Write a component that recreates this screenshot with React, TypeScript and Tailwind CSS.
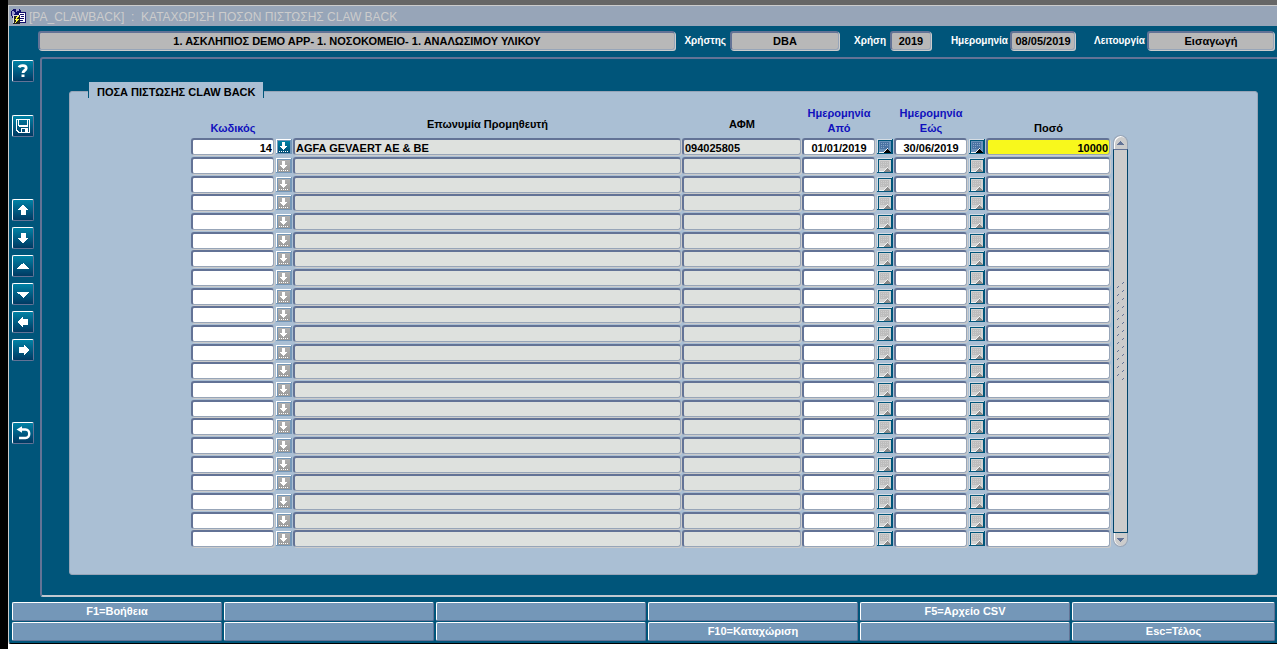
import type { ReactNode } from "react";

const PIXEL = "crispEdges" as const;

function AppIcon() {
  return (
    <svg width="17" height="17" viewBox="0 0 17 17" shapeRendering={PIXEL} aria-hidden="true">
      <path d="M3 1h7v1h1v8h-1v1H4v-1H2V8H1V3h1V2h1z" fill="#10106c" />
      <path d="M2 3h2v1h1v2H4v2H2zM6 1h3v2H7v1H6z" fill="#9c9ccc" />
      <path d="M8 4h8v11H8z" fill="#10106c" />
      <path d="M9 5h6v9H9z" fill="#fff" />
      <path d="M10 6h4v1h-4zM11 8h3v1h-3zM10 10h4v1h-4zM10 12h3v1h-3z" fill="#10106c" />
      <path d="M3 7h7v9H3z" fill="#222" />
      <path d="M3 7h6v1H4v7H3z" fill="#ddd" />
      <path d="M7 8h2v1H8v1H7v1h2v1H8v1H7v1H6v1H5v-1h1v-2H5v-1h1V9h1z" fill="#ffff3c" />
    </svg>
  );
}

function Glyph({ d }: { d: string }) {
  return (
    <svg width="18" height="18" viewBox="0 0 18 18" shapeRendering={PIXEL} aria-hidden="true">
      <path d={d} fill="#fff" />
    </svg>
  );
}

function ToolButton({ label, children }: { label: string; children: ReactNode }) {
  return (
    <button
      type="button"
      aria-label={label}
      className="flex h-[22px] w-[22px] shrink-0 items-center justify-center rounded-[2px] border border-t-white border-l-white border-r-[#637396] border-b-[#637396] bg-linear-to-b from-[#0082a5] to-[#003a63]"
    >
      {children}
    </button>
  );
}

function Toolbar() {
  return (
    <nav aria-label="Εργαλεία" className="flex w-[31px] shrink-0 flex-col pt-[3px] pl-[3px]">
      <ToolButton label="Βοήθεια">
        <svg width="18" height="18" viewBox="0 0 18 18" aria-hidden="true">
          <path d="M5 5.4C6 3 12.2 3 12.2 6.2c0 2.4-3.2 2.2-3.2 4.8" fill="none" stroke="#fff" strokeWidth="2.8" />
          <path d="M7.5 12.5h3V15h-3z" fill="#fff" />
        </svg>
      </ToolButton>
      <div className="flex flex-col pt-[33px]">
        <ToolButton label="Αποθήκευση">
          <Glyph d="M2 2h14v14H4v-1H3v-1H2zM3 3v10h1v1h1v1h2v-4h7v4h1V3h-1v6H4V3zM5 3v5h8V3zM8 12v3h3v-3zM5 9h9v1H5z" />
        </ToolButton>
      </div>
      <div className="flex flex-col gap-1.5 pt-[62px]">
        <ToolButton label="Προηγούμενη εγγραφή">
          <Glyph d="M9 4h1v1h1v1h1v1h1v1h1v1h-2v5H7V9H4V8h1V7h1V6h1V5h1V4z" />
        </ToolButton>
        <ToolButton label="Επόμενη εγγραφή">
          <Glyph d="M7 4h5v5h2v1h-1v1h-1v1h-1v1h-1v1H8v-1H7v-1H6v-1H5v-1H4V9h3z" />
        </ToolButton>
        <ToolButton label="Προηγούμενο μπλοκ">
          <Glyph d="M9 6h1v1h1v1h1v1h1v1h1v1h1v1H3v-1h1v-1h1V9h1V8h1V7h2z" />
        </ToolButton>
        <ToolButton label="Επόμενο μπλοκ">
          <Glyph d="M3 7h12v1h-1v1h-1v1h-1v1h-1v1h-1v1H9v-1H8v-1H7v-1H6V9H4V8H3z" />
        </ToolButton>
        <ToolButton label="Προηγούμενο πεδίο">
          <Glyph d="M4 8h1V7h1V6h1V5h1V4h1v2h5v6H9v2H8v-1H7v-1H6v-1H5v-1H4z" />
        </ToolButton>
        <ToolButton label="Επόμενο πεδίο">
          <Glyph d="M5 6h5V4h1v1h1v1h1v1h1v1h1v2h-1v1h-1v1h-1v1h-1v1h-1v-2H5z" />
        </ToolButton>
      </div>
      <div className="flex flex-col pt-[61px]">
        <ToolButton label="Έξοδος">
          <svg width="18" height="18" viewBox="0 0 18 18" aria-hidden="true">
            <path d="M5 5.5h6.5c5 0 5 8.5 0 8.5H5" fill="none" stroke="#fff" strokeWidth="2.4" />
            <path d="M2.5 5.5 8 2.2v6.6z" fill="#fff" />
          </svg>
        </ToolButton>
      </div>
    </nav>
  );
}

const headerInput =
  "h-[19px] min-w-0 rounded-[3px] border-t-2 border-l-2 border-r border-b border-t-[#637396] border-l-[#637396] border-r-[#97a5b8] border-b-[#97a5b8] bg-[#b8b8b8] text-center text-[11px] font-bold text-black shadow-[1px_1px_0_#ccc] outline-none";

function HeaderBar() {
  const label = "shrink-0 text-right text-[10px] font-bold text-white";
  return (
    <div className="flex h-[31px] items-center pr-[3px] pb-0.5 pl-[29px]">
      <input aria-label="Εφαρμογή" readOnly value="1. ΑΣΚΛΗΠΙΟΣ DEMO APP- 1. ΝΟΣΟΚΟΜΕΙΟ- 1. ΑΝΑΛΩΣΙΜΟΥ ΥΛΙΚΟΥ" className={`${headerInput} flex-1`} />
      <label htmlFor="user" className={`${label} mr-1 w-[51px]`}>Χρήστης</label>
      <input id="user" readOnly value="DBA" className={`${headerInput} w-[109px]`} />
      <label htmlFor="year" className={`${label} mr-1 w-[47px]`}>Χρήση</label>
      <input id="year" readOnly value="2019" className={`${headerInput} w-[41px]`} />
      <label htmlFor="date" className={`${label} mr-0.5 w-[77px]`}>Ημερομηνία</label>
      <input id="date" readOnly value="08/05/2019" className={`${headerInput} w-[65px]`} />
      <label htmlFor="mode" className={`${label} mr-0.5 w-[70px]`}>Λειτουργία</label>
      <input id="mode" readOnly value="Εισαγωγή" className={`${headerInput} w-[127px]`} />
    </div>
  );
}

type Tone = "white" | "gray" | "yellow";

const tones: Record<Tone, string> = {
  white: "bg-white",
  gray: "bg-[#dee1de]",
  yellow: "bg-[#f8f81c]",
};

function Field({ label, value, tone, align }: { label: string; value: string; tone: Tone; align: string }) {
  return (
    <td className="p-0 pr-px align-top">
      <input
        aria-label={label}
        defaultValue={value}
        readOnly={tone === "gray"}
        className={`block h-[17px] w-full min-w-0 rounded-[3px] border-t-2 border-r border-b border-l-2 border-t-[#637396] border-r-[#97a5b8] border-b-[#97a5b8] border-l-[#637396] px-px pt-1 pb-0.5 text-[11px] leading-none font-bold text-black shadow-[1px_1px_0_#ccc] outline-none ${tones[tone]} ${align}`}
      />
    </td>
  );
}

function LookupCell({ active }: { active: boolean }) {
  return (
    <td className="p-0 pl-px align-top">
      <button type="button" aria-label="Λίστα τιμών" className="block h-[17px] w-4">
        <svg width="16" height="17" viewBox="0 0 16 17" shapeRendering={PIXEL} aria-hidden="true">
          <defs>
            <linearGradient id={active ? "lookup-on" : "lookup-off"} x2="0" y2="1">
              <stop offset="0" stopColor={active ? "#0082a5" : "#b0b0b0"} />
              <stop offset="1" stopColor={active ? "#004a73" : "#999"} />
            </linearGradient>
          </defs>
          <path d="M0 1h16v15H0z" fill="#7497b8" />
          <path d="M0 1h15v1H1v13H0z" fill="#fff" />
          <path d="M2 3h12v12H2z" fill={active ? "url(#lookup-on)" : "url(#lookup-off)"} />
          <path d="M6 4h3v4h2v1h-1v1H9v1H8v1H7v-1H6v-1H5V9H4V8h2z" fill="#fff" />
          <path d="M3 13h1v1H3zM5 13h1v1H5zM7 13h1v1H7zM9 13h1v1H9zM11 13h1v1h-1z" fill="#fff" />
        </svg>
      </button>
    </td>
  );
}

function CalendarCell({ active }: { active: boolean }) {
  return (
    <td className="p-0 pl-px align-top">
      <button type="button" aria-label="Ημερολόγιο" className="block h-[17px] w-4">
        <svg width="16" height="17" viewBox="0 0 16 17" shapeRendering={PIXEL} aria-hidden="true">
          <path d="M0 1h16v15H0z" fill="#00557a" />
          <path d="M0 1h15v1H1v13H0z" fill="#d6dde4" />
          <path d="M2 3h12v12H2z" fill={active ? "#6b92bb" : "#d2d2d2"} />
          <path d="M3 4h9v7H3z" fill={active ? "#4a73a3" : "#bdbdbd"} />
          <path
            d="M4 5h1v1H4zM6 5h1v1H6zM8 5h1v1H8zM10 5h1v1h-1zM4 7h1v1H4zM6 7h1v1H6zM8 7h1v1H8zM10 7h1v1h-1zM4 9h1v1H4zM6 9h1v1H6z"
            fill={active ? "#86a6c8" : "#cfcfcf"}
          />
          <path d="M2 14h12v1H2zM10 10h1v1h-1zM9 11h1v1H9zM8 12h1v1H8zM7 13h1v1H7z" fill="#f4f4f4" />
          <path d="M10 11h1v1h1v1h1v1h1v1H7v-1h1v-1h1v-1h1z" fill={active ? "#000" : "#8a8a8a"} />
        </svg>
      </button>
    </td>
  );
}

interface Credit {
  code: string;
  supplier: string;
  taxId: string;
  from: string;
  to: string;
  amount: string;
}

const blank: Credit = { code: "", supplier: "", taxId: "", from: "", to: "", amount: "" };
const credits: Credit[] = [
  { code: "14", supplier: "AGFA GEVAERT AE & BE", taxId: "094025805", from: "01/01/2019", to: "30/06/2019", amount: "10000" },
  ...Array.from({ length: 21 }, () => blank),
];

function CreditTable() {
  const blue = "p-0 pb-0.5 text-[11px] leading-[15px] font-bold text-[#1010bd] align-bottom";
  const black = "p-0 text-[11px] leading-[15px] font-bold text-black";
  return (
    <table className="w-full table-fixed border-collapse">
      <colgroup>
        <col className="w-[84px]" />
        <col className="w-[18px]" />
        <col />
        <col className="w-[120px]" />
        <col className="w-[74px]" />
        <col className="w-[18px]" />
        <col className="w-[74px]" />
        <col className="w-[18px]" />
        <col className="w-[125px]" />
      </colgroup>
      <thead>
        <tr className="h-[33px]">
          <th className={blue}>Κωδικός</th>
          <td />
          <th className={`${black} align-bottom pb-1.5`}>Επωνυμία Προμηθευτή</th>
          <th className={`${black} align-bottom pb-1.5`}>ΑΦΜ</th>
          <th className={blue}>Ημερομηνία Από</th>
          <td />
          <th className={blue}>Ημερομηνία Εώς</th>
          <td />
          <th className={`${black} align-bottom pb-0.5`}>Ποσό</th>
        </tr>
      </thead>
      <tbody>
        {credits.map((c, i) => (
          <tr key={i} className={i % 3 === 2 ? "h-[18px]" : "h-[19px]"}>
            <Field label="Κωδικός" value={c.code} tone="white" align="text-right" />
            <LookupCell active={i === 0} />
            <Field label="Επωνυμία Προμηθευτή" value={c.supplier} tone="gray" align="text-left" />
            <Field label="ΑΦΜ" value={c.taxId} tone="gray" align="text-left" />
            <Field label="Ημερομηνία Από" value={c.from} tone="white" align="text-center" />
            <CalendarCell active={i === 0} />
            <Field label="Ημερομηνία Εώς" value={c.to} tone="white" align="text-center" />
            <CalendarCell active={i === 0} />
            <Field label="Ποσό" value={c.amount} tone={i === 0 ? "yellow" : "white"} align="text-right" />
          </tr>
        ))}
      </tbody>
    </table>
  );
}

function ScrollColumn() {
  return (
    <div className="mt-[30px] mb-0.5 ml-0.5 flex w-[15px] shrink-0 flex-col">
      <button type="button" aria-label="Πάνω" className="flex h-3.5 items-center justify-center rounded-t-full border border-b-0 border-[#97a5b8] bg-[#ccc] shadow-[inset_1px_1px_0_#fff]">
        <svg width="7" height="4" viewBox="0 0 7 4" shapeRendering={PIXEL} aria-hidden="true">
          <path d="M3 0h1v1h1v1h1v1h1v1H0V3h1V2h1V1h1z" fill="#637396" />
        </svg>
      </button>
      <div className="flex flex-1 items-center justify-center border border-[#00446a] border-t-[#637396] bg-[#ccc] pb-5">
        <svg width="9" height="98" viewBox="0 0 9 98" shapeRendering={PIXEL} aria-hidden="true">
          {Array.from({ length: 13 }, (_, i) => (
            <g key={i} transform={`translate(0 ${i * 8})`} fill="#637396">
              <path d="M6 1h1v1H6zM7 0h1v1H7z" />
              <path d="M1 5h1v1H1zM2 4h1v1H2z" />
            </g>
          ))}
        </svg>
      </div>
      <button type="button" aria-label="Κάτω" className="flex h-3.5 items-center justify-center rounded-b-full border border-t-0 border-[#97a5b8] bg-[#ccc] shadow-[inset_1px_0_0_#fff]">
        <svg width="7" height="4" viewBox="0 0 7 4" shapeRendering={PIXEL} aria-hidden="true">
          <path d="M0 0h7v1H6v1H5v1H4v1H3V3H2V2H1V1H0z" fill="#637396" />
        </svg>
      </button>
    </div>
  );
}

const functionKeys = ["F1=Βοήθεια", "", "", "", "F5=Αρχείο CSV", "", "", "", "", "F10=Καταχώριση", "", "Esc=Τέλος"];

function FunctionKeys() {
  return (
    <footer className="grid grid-cols-[repeat(5,210fr)_203fr] gap-x-0.5 gap-y-px pt-[5px] pr-0.5 pb-0.5 pl-[3px]">
      {functionKeys.map((text, i) => (
        <button
          key={i}
          type="button"
          aria-label={text || `Πλήκτρο ${i + 1}`}
          className="h-[19px] rounded-[2px] border border-t-white border-r-[#637396] border-b-[#637396] border-l-white bg-[#7497b8] text-[11px] leading-[17px] font-bold text-white"
        >
          {text}
        </button>
      ))}
    </footer>
  );
}

export default function App() {
  return (
    <div className="flex min-h-screen bg-white font-['Liberation_Sans',Arial,sans-serif]">
      <div className="w-2 shrink-0 bg-black" />
      <div className="flex min-w-0 flex-1 flex-col">
        <div className="h-[5px] bg-[#666]" />
        <div className="flex flex-1 flex-col rounded-bl-[3px] border-t border-b border-l border-[#ccc] border-b-black bg-[#00557a]">
          <header className="flex h-5 items-center bg-[#97a5b8] pl-px">
            <AppIcon />
            <h1 className="ml-0.5 pt-0.5 text-[12px] leading-4 whitespace-pre text-[#ccc]">
              {"[PA_CLAWBACK]  :  ΚΑΤΑΧΩΡΙΣΗ ΠΟΣΩΝ ΠΙΣΤΩΣΗΣ CLAW BACK"}
            </h1>
          </header>
          <HeaderBar />
          <div className="flex flex-1">
            <Toolbar />
            <main className="flex min-w-0 flex-1 flex-col rounded-l-[3px] border-t-2 border-b-2 border-l-2 border-[#637396] border-b-[#c0c8d0] pt-[23px] pr-[19px] pb-5 pl-[27px]">
              <h2 className="z-10 -mb-[7px] ml-[19px] h-4 self-start border-x border-[#00557a] bg-[#aabfd4] px-2 text-[11px] leading-[21px] font-bold text-black">
                ΠΟΣΑ ΠΙΣΤΩΣΗΣ CLAW BACK
              </h2>
              <section className="flex flex-1 items-start rounded-[3px] border border-[#97a5b8] bg-[#aabfd4] pt-[13px] pr-[129px] pb-[25px] pl-[121px]">
                <div className="flex min-w-0 flex-1">
                  <CreditTable />
                  <ScrollColumn />
                </div>
              </section>
            </main>
          </div>
          <FunctionKeys />
        </div>
        <div className="h-[5px]" />
      </div>
    </div>
  );
}
